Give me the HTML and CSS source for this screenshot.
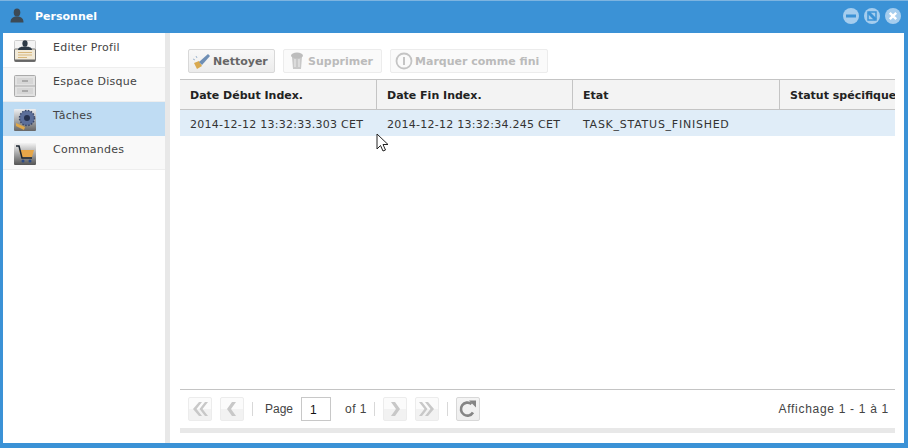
FILE: index.html
```html
<!DOCTYPE html>
<html lang="en">
<head>
    <meta charset="UTF-8">
    <title>Personnel</title>
    <link rel="stylesheet" href="styles.css">
</head>
<body>
    <div class="window">
        <div class="titlebar">
            <svg class="user-icon" width="16" height="16" viewBox="0 0 16 16"><ellipse cx="8" cy="4.500" rx="3.300" ry="4" fill="#3d4a55"/><path d="M1.500 14.500c0-4 2-5 4.500-6h4c2.500 1 4.500 2 4.500 6z" fill="#3d4a55"/></svg>
            <span class="title">Personnel</span>
            <div class="win-buttons">
                <svg width="16" height="16" viewBox="0 0 16 16"><circle cx="8" cy="8" r="8" fill="#a5cdee"/><rect x="3" y="6.500" width="10" height="3" fill="#3b92d6"/></svg>
                <svg width="16" height="16" viewBox="0 0 16 16"><circle cx="8" cy="8" r="8" fill="#a5cdee"/><rect x="4" y="4" width="8" height="8" fill="none" stroke="#3b92d6" stroke-width="1.500"/><path d="M4.500 4.500l7 7" stroke="#3b92d6" stroke-width="3"/></svg>
                <svg width="16" height="16" viewBox="0 0 16 16"><circle cx="8" cy="8" r="8" fill="#a5cdee"/><path d="M4.800 4.800l6.400 6.400M11.200 4.800l-6.400 6.400" stroke="#fff" stroke-width="2.400"/></svg>
            </div>
        </div>
        <div class="body">
            <div class="sidebar">
                <div class="side-item">
                    <svg class="side-icon" width="22" height="22" viewBox="0 0 22 22"><rect x="0.500" y="0.500" width="21" height="21" rx="1" fill="#f4f4f4" stroke="#cfcfcf"/><rect x="0.500" y="9" width="21" height="12.500" rx="1" fill="#f2ead8" stroke="#777"/><rect x="1" y="19.500" width="20" height="2" fill="#666"/><ellipse cx="11" cy="3.500" rx="2.600" ry="3.200" fill="#2d3a46"/><path d="M4 10c0-3 4-3.500 7-3.500s7 .5 7 3.500z" fill="#2d3a46"/><path d="M4 12.500h14M4 15h14M4 17.500h9" stroke="#d8b77c"/></svg>
                    <span>Editer Profil</span>
                </div>
                <div class="side-item">
                    <svg class="side-icon" width="22" height="22" viewBox="0 0 22 22"><rect x="0.500" y="0.500" width="21" height="21" rx="1" fill="#e2e2e2" stroke="#aaa"/><path d="M1 11h20" stroke="#aaa"/><rect x="3" y="3" width="16" height="6" fill="#d6d6d6"/><rect x="3" y="13" width="16" height="6" fill="#d6d6d6"/><rect x="8" y="5" width="6" height="2" fill="#aaa"/><rect x="8" y="15" width="6" height="2" fill="#aaa"/></svg>
                    <span>Espace Disque</span>
                </div>
                <div class="side-item selected">
                    <svg class="side-icon" width="22" height="22" viewBox="0 0 22 22"><defs><linearGradient id="gearbg" x1="0" y1="0" x2="0" y2="1"><stop offset="0" stop-color="#eef0f2"/><stop offset="1" stop-color="#666"/></linearGradient></defs><rect width="22" height="22" rx="1" fill="url(#gearbg)"/><circle cx="13" cy="9" r="7.500" fill="#5c6f9a"/><circle cx="13" cy="9" r="7.500" fill="none" stroke="#3a4766" stroke-width="1.500" stroke-dasharray="1.500 1.500"/><circle cx="13" cy="9" r="3" fill="#26324f"/><path d="M2 14l9 4-1 3-8-4z" fill="#e0a848"/></svg>
                    <span>Tâches</span>
                </div>
                <div class="side-item">
                    <svg class="side-icon" width="22" height="22" viewBox="0 0 22 22"><defs><linearGradient id="cartbg" x1="0" y1="0" x2="0" y2="1"><stop offset="0" stop-color="#f4f4f4"/><stop offset="1" stop-color="#555"/></linearGradient></defs><rect width="22" height="22" rx="1" fill="url(#cartbg)"/><path d="M5 7h15l-2 7H7z" fill="#e6a648"/><path d="M2 3h3l3 12h10" fill="none" stroke="#1c2630" stroke-width="1.500"/><circle cx="9" cy="18" r="1.500" fill="#2b4a86"/><circle cx="16" cy="18" r="1.500" fill="#2b4a86"/></svg>
                    <span>Commandes</span>
                </div>
            </div>
            <div class="main">
                <div class="toolbar">
                    <button class="btn btn-first">
                        <svg width="20" height="20" viewBox="0 0 20 20"><path d="M2 12l5-2 3 5-5 3z" fill="#d9a94f"/><path d="M7 11l9-8 2 2-8 9z" fill="#6f8fb5"/><path d="M1 8l2 1M4 5l1 2" stroke="#9fb6cf"/></svg>
                        Nettoyer
                    </button>
                    <button class="btn disabled">
                        <svg width="20" height="20" viewBox="0 0 20 20"><path d="M5 6h10l-1 12H6z" fill="#c9c9c9"/><ellipse cx="10" cy="4.500" rx="6" ry="3" fill="#bdbdbd"/><path d="M8 8v8M12 8v8" stroke="#eee"/></svg>
                        Supprimer
                    </button>
                    <button class="btn disabled">
                        <svg width="20" height="20" viewBox="0 0 20 20"><circle cx="10" cy="10" r="7.500" fill="none" stroke="#c4c4c4" stroke-width="1.800"/><rect x="9" y="6" width="2" height="8" fill="#c4c4c4"/></svg>
                        Marquer comme fini
                    </button>
                </div>
                <div class="grid">
                    <div class="grid-row head">
                        <div class="cell c1">Date Début Index.</div>
                        <div class="cell c2">Date Fin Index.</div>
                        <div class="cell c3">Etat</div>
                        <div class="cell c4">Statut spécifique</div>
                    </div>
                    <div class="grid-row data">
                        <div class="cell c1">2014-12-12 13:32:33.303 CET</div>
                        <div class="cell c2">2014-12-12 13:32:34.245 CET</div>
                        <div class="cell c3">TASK_STATUS_FINISHED</div>
                        <div class="cell c4"></div>
                    </div>
                </div>
                <div class="pager">
                    <button class="pg-btn off"><svg width="18" height="18" viewBox="0 0 18 18"><path d="M8 2L2 9l6 7h3L5.500 9 11 2zM14 2L8.500 9l5.500 7h3l-5.500-7L17 2z" fill="#c8c8c8"/></svg></button>
                    <button class="pg-btn off gap-left"><svg width="18" height="18" viewBox="0 0 18 18"><path d="M9 2L4 9l5 7h4L8 9l5-7z" fill="#c8c8c8"/></svg></button>
                    <span class="sep"></span>
                    <span class="pg-text">Page</span>
                    <span class="pg-input">1</span>
                    <span class="pg-text of">of 1</span>
                    <span class="sep"></span>
                    <button class="pg-btn off"><svg width="18" height="18" viewBox="0 0 18 18"><path d="M9 2l5 7-5 7H5l5-7-5-7z" fill="#c8c8c8"/></svg></button>
                    <button class="pg-btn off gap-left"><svg width="18" height="18" viewBox="0 0 18 18"><path d="M10 2l6 7-6 7H7l5.500-7L7 2zM4 2l5.500 7L4 16H1l5.500-7L1 2z" fill="#c8c8c8"/></svg></button>
                    <span class="sep"></span>
                    <button class="pg-btn"><svg width="20" height="20" viewBox="0 0 20 20"><path d="M15 13.500A6.500 6.500 0 1 1 13.500 5" fill="none" stroke="#858585" stroke-width="2.600"/><path d="M11 1.500h7v7z" fill="#858585"/></svg></button>
                    <span class="pg-info">Affichage 1 - 1 à 1</span>
                </div>
                <div class="scrollbar"></div>
            </div>
        </div>
        <svg class="cursor" width="14" height="20" viewBox="0 0 14 20"><path d="M1 1v15l3.500-3.500L7 18l2.500-1-2.500-5.500h5z" fill="#fff" stroke="#222" stroke-width="1"/></svg>
    </div>
</body>
</html>
```

FILE: styles.css
```css
html, body {
    margin: 0;
    padding: 0;
}

body {
    width: 908px;
    height: 448px;
    overflow: hidden;
    background-color: #fff;
    font-family: "DejaVu Sans", sans-serif;
    font-size: 11px;
    color: #333;
}

.window {
    position: relative;
    box-sizing: border-box;
    width: 908px;
    height: 448px;
    background-color: #3b92d6;
    border-top: 1px solid #7db4e0;
    padding: 0 4px 5px 3px;
    display: flex;
    flex-direction: column;
}

.titlebar {
    box-sizing: border-box;
    height: 32px;
    padding-bottom: 2px;
    display: flex;
    align-items: center;
    flex-shrink: 0;
}

.user-icon {
    margin-left: 6px;
}

.title {
    margin-left: 10px;
    font-size: 11px;
    font-weight: bold;
    color: #fff;
}

.win-buttons {
    margin-left: auto;
    margin-right: 3px;
    display: flex;
    gap: 5px;
}

.body {
    flex: 1;
    display: flex;
    background-color: #fff;
    min-height: 0;
}

.sidebar {
    width: 162px;
    flex-shrink: 0;
    padding-top: 1px;
    background-color: #fff;
    border-right: 5px solid #e8e8e8;
}

.side-item {
    box-sizing: border-box;
    height: 34px;
    display: flex;
    padding: 7px 0 0 11px;
    background-color: #f9f9f9;
    border-bottom: 1px solid #eeeeee;
    letter-spacing: 0.25px;
    color: #444;
    line-height: 13px;
}

.side-item:first-child {
    background-color: #fff;
}

.side-item:first-child .side-icon {
    margin-top: -1px;
}

.side-item.selected {
    background-color: #bfdcf3;
    border-bottom-color: #bfdcf3;
}

.side-icon {
    margin-right: 17px;
}

.main {
    flex: 1;
    min-width: 0;
    padding: 16px 9px 0 10px;
    display: flex;
    flex-direction: column;
}

.toolbar {
    display: flex;
    gap: 8px;
    padding-left: 8px;
    height: 30px;
    flex-shrink: 0;
}

.btn {
    box-sizing: border-box;
    height: 24px;
    padding: 0 8px 0 3px;
    display: flex;
    align-items: center;
    gap: 1px;
    font-family: "DejaVu Sans", sans-serif;
    font-size: 11px;
    font-weight: bold;
    color: #666;
    background: linear-gradient(#f8f8f8, #ececec);
    border: 1px solid #d8d8d8;
    border-radius: 2px;
}

.btn-first {
    width: 87px;
    padding-right: 0;
}

.btn.disabled {
    color: #bbbbbb;
    background: #fafafa;
    border-color: #ececec;
}

.grid {
    flex: 1;
    overflow: hidden;
}

.grid-row {
    display: flex;
}

.cell {
    box-sizing: border-box;
    flex-shrink: 0;
    padding-left: 10px;
    white-space: nowrap;
}

.c1 { width: 197px; }
.c2 { width: 196px; }
.c3 { width: 207px; }
.c4 { width: 115px; overflow: hidden; }

.head {
    height: 31px;
    background-color: #f3f3f3;
    border-top: 1px solid #c4c4c4;
    border-bottom: 1px solid #c4c4c4;
    box-sizing: border-box;
    font-weight: bold;
    color: #222;
    line-height: 31px;
}

.head .cell {
    border-right: 1px solid #c4c4c4;
}

.head .c4 {
    border-right: none;
}

.data {
    height: 26px;
    background-color: #e0edf8;
    line-height: 29px;
    letter-spacing: 0.26px;
    color: #333;
}

.data .c3 {
    letter-spacing: 0.75px;
}

.pager {
    height: 39px;
    flex-shrink: 0;
    box-sizing: border-box;
    border-top: 1px solid #c4c4c4;
    display: flex;
    align-items: center;
    padding: 0 6px 0 8px;
}

.pg-btn {
    box-sizing: border-box;
    width: 24px;
    height: 24px;
    padding: 0;
    display: flex;
    align-items: center;
    justify-content: center;
    background: linear-gradient(#f4f4f4, #eeeeee);
    border: 1px solid #d8d8d8;
    border-radius: 2px;
}

.pg-btn.off {
    background: linear-gradient(#fbfbfb 50%, #f2f2f2 50%);
    border-color: #ececec;
}

.gap-left {
    margin-left: 8px;
}

.sep {
    width: 1px;
    height: 14px;
    background-color: #d8d8d8;
    margin: 0 8px;
}

.pg-text {
    font-family: "Liberation Sans", Arial, sans-serif;
    font-size: 12px;
    color: #444;
    margin-left: 4px;
}

.pg-text.of {
    margin-left: 14px;
    margin-right: -1px;
    letter-spacing: 0.5px;
}

.pg-input {
    box-sizing: border-box;
    width: 30px;
    height: 24px;
    margin-left: 8px;
    padding: 5px 0 0 8px;
    border: 1px solid #c8c8c8;
    font-family: "Liberation Sans", Arial, sans-serif;
    font-size: 12px;
    color: #111;
}

.pg-info {
    margin-left: auto;
    font-family: "Liberation Sans", Arial, sans-serif;
    font-size: 12px;
    letter-spacing: 0.7px;
    color: #444;
}

.scrollbar {
    height: 5px;
    background-color: #e8e8e8;
    margin-bottom: 10px;
    flex-shrink: 0;
}

.cursor {
    position: absolute;
    left: 376px;
    top: 132px;
}
```
